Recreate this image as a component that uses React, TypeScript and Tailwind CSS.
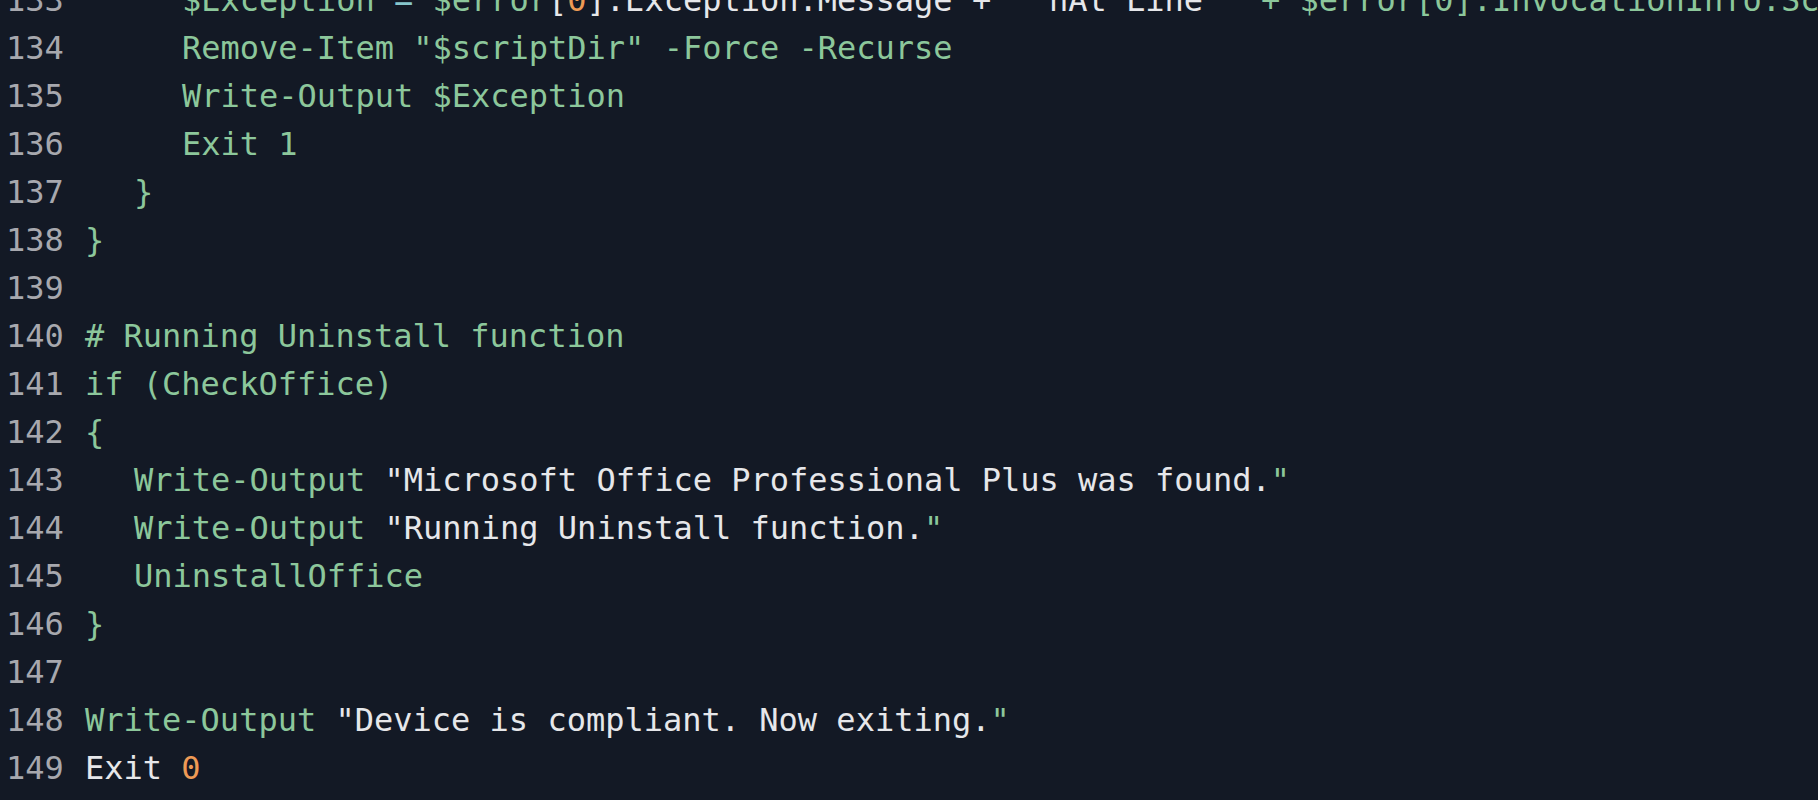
const G = "text-[#8cc79b]";
const W = "text-[#e6e7ea]";
const O = "text-[#ee9a55]";
const C = "text-[#86c6cc]";

type Seg = { t: string; c: string };
type Line = { n: number; indent: number; segs: Seg[] };

const lines: Line[] = [
  {
    n: 133,
    indent: 2,
    segs: [
      { t: "$Exception", c: G },
      { t: " = ", c: C },
      { t: "$error", c: G },
      { t: "[", c: W },
      { t: "0", c: O },
      { t: "].Exception.Message + ", c: W },
      { t: '"`nAt Line "', c: W },
      { t: " + $error[0].InvocationInfo.ScriptLineNumber", c: G },
    ],
  },
  { n: 134, indent: 2, segs: [{ t: 'Remove-Item "$scriptDir" -Force -Recurse', c: G }] },
  { n: 135, indent: 2, segs: [{ t: "Write-Output $Exception", c: G }] },
  { n: 136, indent: 2, segs: [{ t: "Exit 1", c: G }] },
  { n: 137, indent: 1, segs: [{ t: "}", c: G }] },
  { n: 138, indent: 0, segs: [{ t: "}", c: G }] },
  { n: 139, indent: 0, segs: [] },
  { n: 140, indent: 0, segs: [{ t: "# Running Uninstall function", c: G }] },
  { n: 141, indent: 0, segs: [{ t: "if (CheckOffice)", c: G }] },
  { n: 142, indent: 0, segs: [{ t: "{", c: G }] },
  {
    n: 143,
    indent: 1,
    segs: [
      { t: "Write-Output ", c: G },
      { t: '"Microsoft Office Professional Plus was found.', c: W },
      { t: '"', c: G },
    ],
  },
  {
    n: 144,
    indent: 1,
    segs: [
      { t: "Write-Output ", c: G },
      { t: '"Running Uninstall function.', c: W },
      { t: '"', c: G },
    ],
  },
  { n: 145, indent: 1, segs: [{ t: "UninstallOffice", c: G }] },
  { n: 146, indent: 0, segs: [{ t: "}", c: G }] },
  { n: 147, indent: 0, segs: [] },
  {
    n: 148,
    indent: 0,
    segs: [
      { t: "Write-Output ", c: G },
      { t: '"Device is compliant. Now exiting.', c: W },
      { t: '"', c: G },
    ],
  },
  {
    n: 149,
    indent: 0,
    segs: [
      { t: "Exit ", c: W },
      { t: "0", c: O },
    ],
  },
];

const indentClass = ["pl-0", "pl-[49px]", "pl-[97px]"];

const App = () => {
  return (
    <div className="h-[800px] w-full overflow-hidden bg-[#131925] font-['DejaVu_Sans_Mono',monospace] text-[32px] leading-[48px]">
      <div className="-mt-[24px] pl-[6px]">
        {lines.map((line) => (
          <div key={line.n} className="flex h-[48px] whitespace-pre">
            <span className="w-[79px] shrink-0 text-[#a7a8ae]">{line.n}</span>
            <span className={indentClass[line.indent]}>
              {line.segs.map((s, i) => (
                <span key={i} className={s.c}>
                  {s.t}
                </span>
              ))}
            </span>
          </div>
        ))}
      </div>
    </div>
  );
};

export default App;
